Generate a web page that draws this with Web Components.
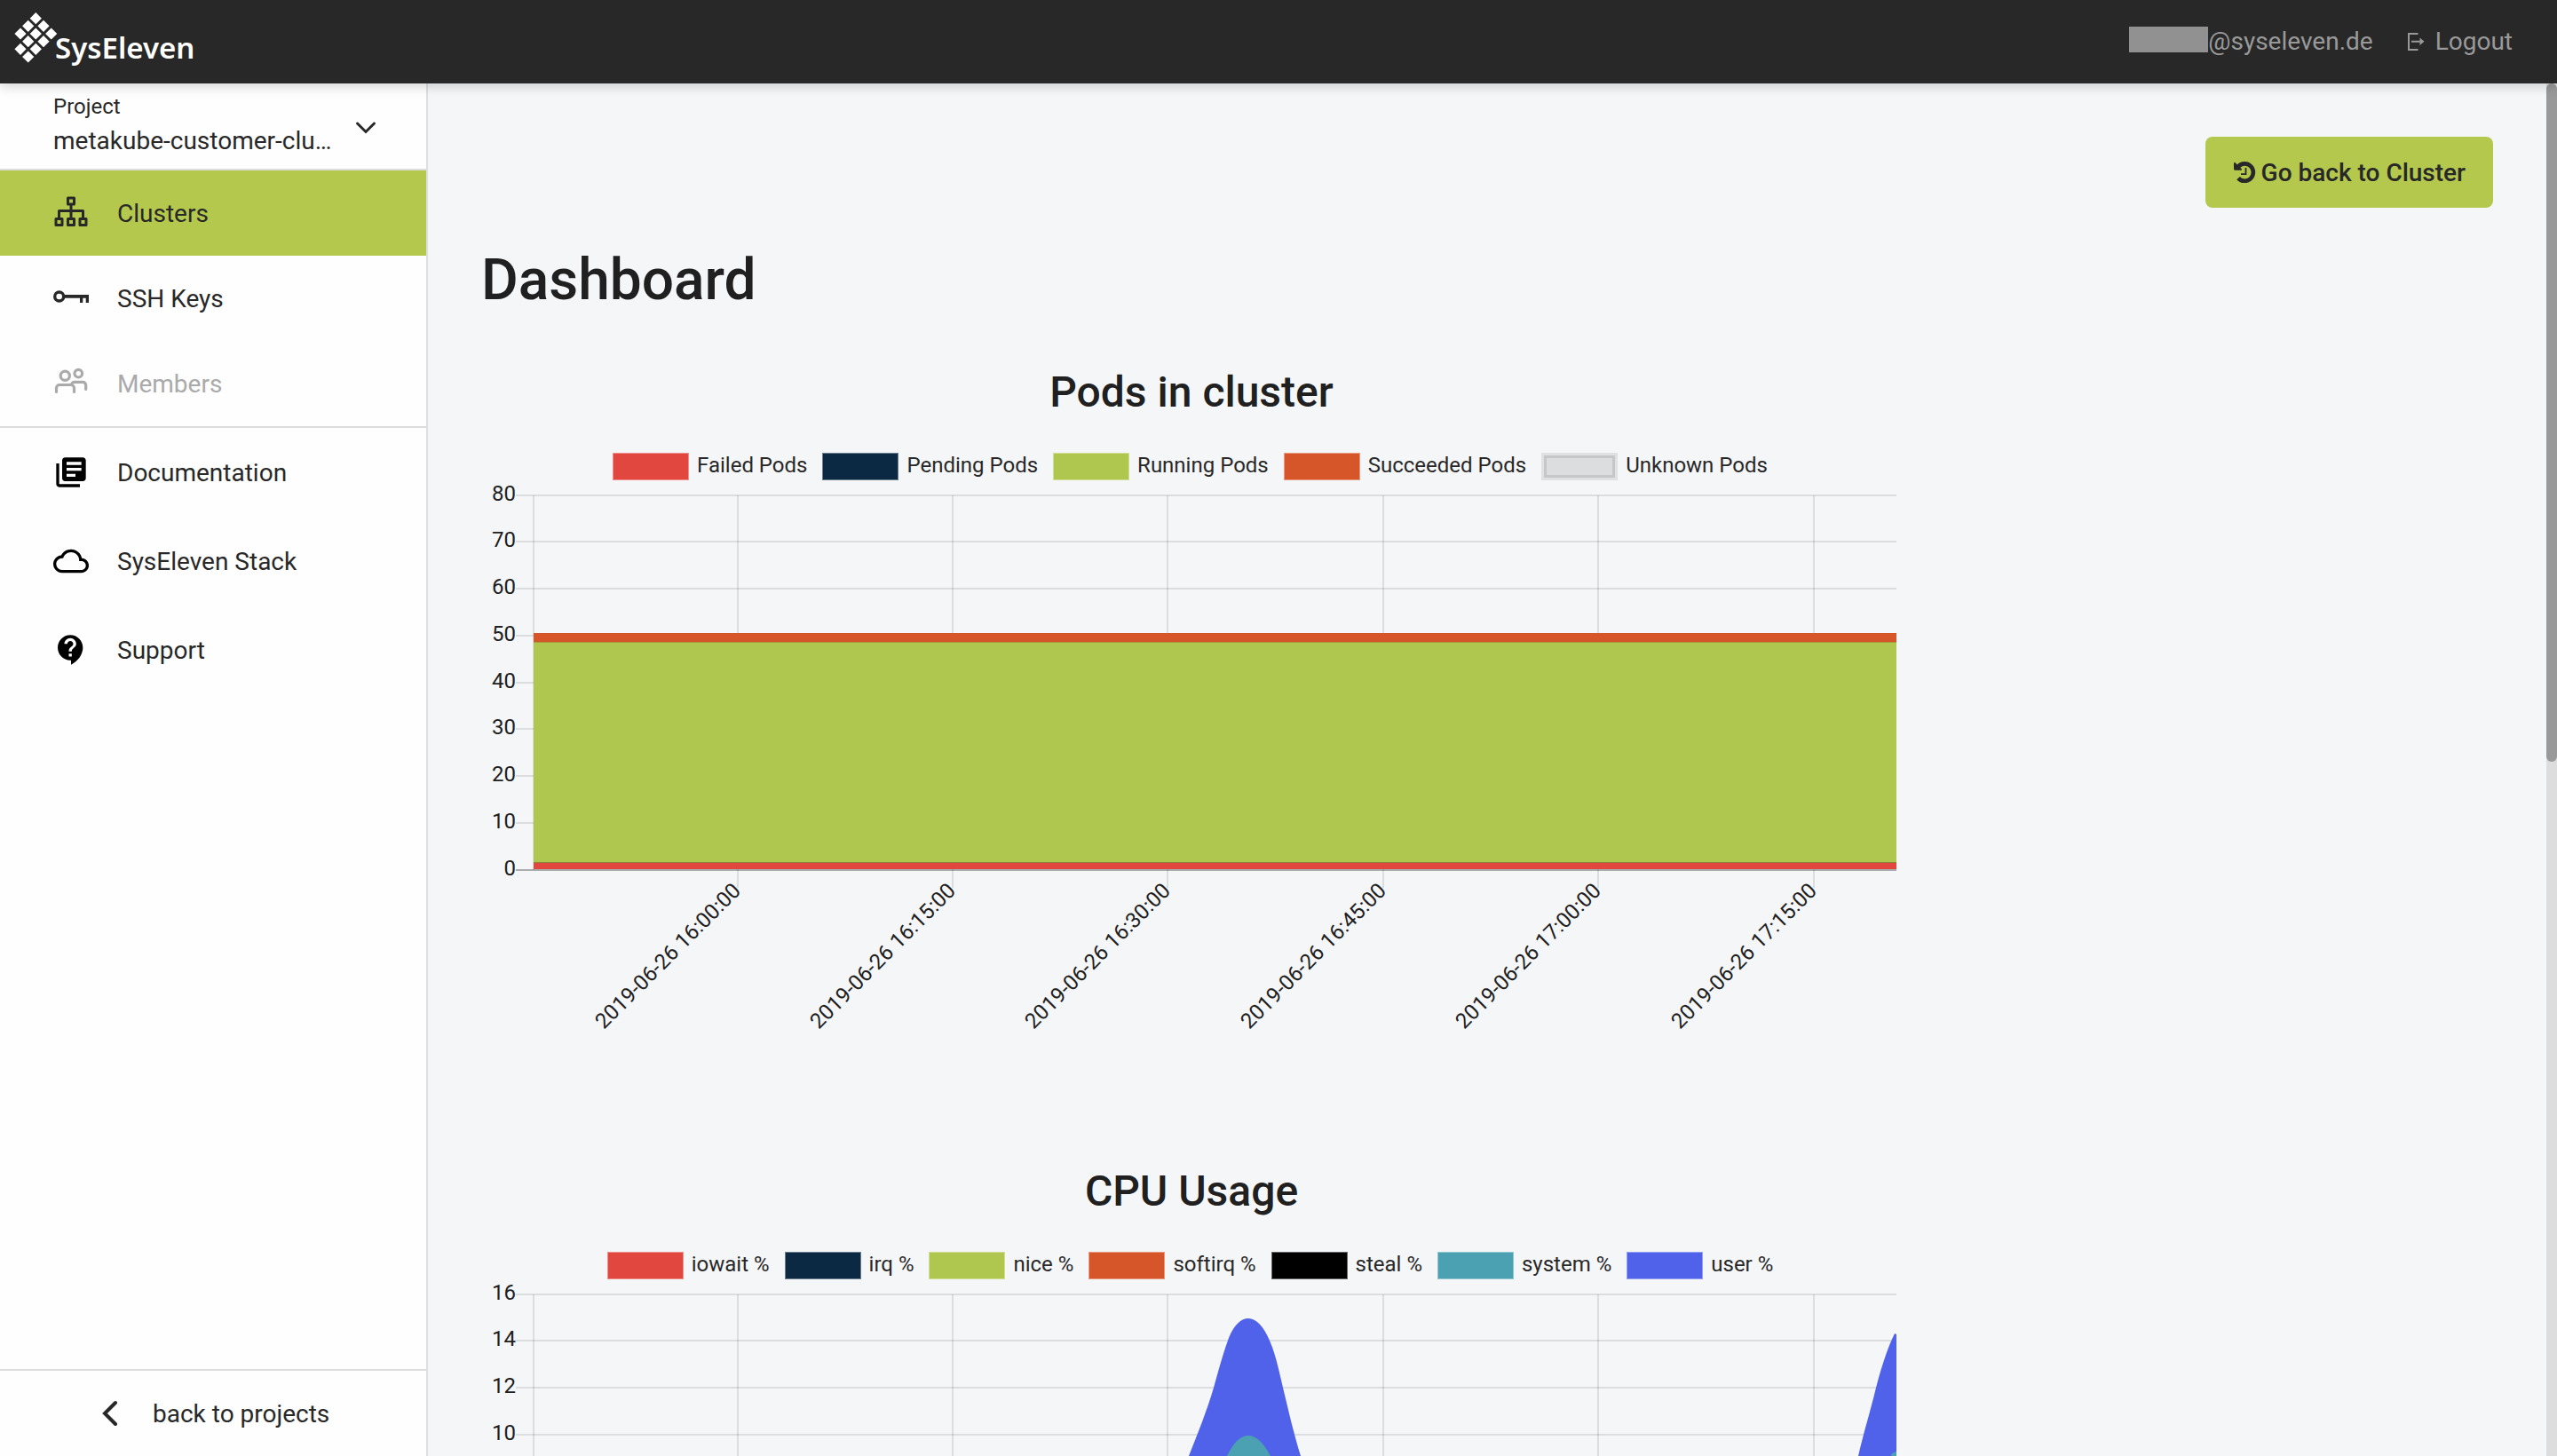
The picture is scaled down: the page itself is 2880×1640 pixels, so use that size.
<!DOCTYPE html>
<html lang="en">
<head>
<meta charset="utf-8">
<title>Dashboard</title>
<style>
  html, body { height: 100%; }
  body {
    margin: 0;
    font-family: Roboto, "Liberation Sans", sans-serif;
    font-size: 28px;
    line-height: 36px;
    color: #282828;
    background: #f5f6f8;
  }
</style>
</head>
<body>
<app-shell>
  <top-bar slot="header"></top-bar>
  <side-nav slot="nav"></side-nav>
  <dashboard-page></dashboard-page>
</app-shell>

<script>
const define = (name, html, setup) => customElements.define(name, class extends HTMLElement {
  constructor() {
    super();
    const t = document.createElement('template');
    t.innerHTML = html;
    this.attachShadow({ mode: 'open' }).append(t.content.cloneNode(true));
  }
  connectedCallback() { if (setup) setup(this, this.shadowRoot); }
});

const ICONS = {
  clusters: '<g fill="none" stroke="currentColor" stroke-width="3" stroke-linejoin="round"><rect x="16.5" y="3" width="7" height="7"/><rect x="3" y="26.5" width="7" height="7"/><rect x="16.5" y="26.5" width="7" height="7"/><rect x="30" y="26.5" width="7" height="7"/><path d="M20 11v14M6.500 25v-7.500h27v7.500"/></g>',
  key: '<circle cx="6.700" cy="18" r="5" fill="none" stroke="currentColor" stroke-width="3.400"/><path fill="currentColor" d="M12.500 16H40v9h-3.300v-5.300h-3.400V25H30v-5.300H12.500z"/>',
  members: '<g fill="none" stroke="currentColor" stroke-width="3.200" stroke-linecap="round"><circle cx="13.300" cy="11.300" r="5.100"/><circle cx="28.300" cy="8.700" r="4.300"/><path d="M3.500 29.500V25a3.500 3.500 0 0 1 3.500-3.500h13a3.500 3.500 0 0 1 3.500 3.500v4.500M21 20a4 4 0 0 1 2.500-1.700h9.700a3.500 3.500 0 0 1 3.500 3.500v4.700"/></g>',
  docs: '<path fill="#000" transform="scale(1.6667)" d="M4 6H2v14c0 1.1.9 2 2 2h14v-2H4V6zm16-4H8c-1.100 0-2 .9-2 2v12c0 1.100.9 2 2 2h12c1.100 0 2-.9 2-2V4c0-1.100-.9-2-2-2zm-1 9H9V9h10v2zm-4 4H9v-2h6v2zm4-8H9V5h10v2z"/>',
  cloud: '<path fill="#000" transform="scale(1.6667)" d="M19.350 10.040C18.670 6.590 15.640 4 12 4 9.110 4 6.600 5.640 5.350 8.040 2.340 8.360 0 10.910 0 14c0 3.310 2.690 6 6 6h13c2.760 0 5-2.240 5-5 0-2.640-2.050-4.780-4.650-4.960zM19 18H6c-2.210 0-4-1.790-4-4s1.790-4 4-4h.710C7.370 7.690 9.480 6 12 6c3.040 0 5.500 2.460 5.500 5.500v.5H19c1.660 0 3 1.340 3 3s-1.340 3-3 3z"/>',
  support: '<path fill="#000" transform="scale(1.6667)" d="M11.500 2C6.810 2 3 5.810 3 10.500S6.810 19 11.500 19h.5v3c4.860-2.340 8-7 8-11.500C20 5.810 16.190 2 11.500 2zm1 14.500h-2v-2h2v2zm0-3.500h-2c0-3.250 3-3 3-5 0-1.100-.9-2-2-2s-2 .9-2 2h-2c0-2.210 1.790-4 4-4s4 1.790 4 4c0 2.500-3 2.750-3 5z"/>'
};

define('app-shell', `
  <style>
    :host { display: flex; flex-direction: column; height: 100vh; }
    .body { display: flex; flex: 1; min-height: 0; }
    ::slotted([slot=header]) { position: relative; z-index: 1; }
    main { flex: 1; min-width: 0; overflow: auto; scrollbar-width: none; }
    .track { flex: none; width: 12px; background: #ddd; }
    .thumb { height: 49.4%; background: #999; border-radius: 6px; }
  </style>
  <slot name="header"></slot>
  <div class="body">
    <slot name="nav"></slot>
    <main><slot></slot></main>
    <div class="track"><div class="thumb"></div></div>
  </div>`);

define('brand-logo', `
  <style>
    :host { display: block; }
    a { display: flex; align-items: flex-start; color: #fff; text-decoration: none; }
    svg { flex: none; width: 62px; height: 72px; }
    span { font: 600 33px/40px "Noto Sans", sans-serif; margin-top: 34px; }
  </style>
  <a href="#"><svg viewBox="0 0 62 72" aria-hidden="true"></svg><span>SysEleven</span></a>`,
  (el, root) => {
    const centres = [[121,62],[95,88],[147,88],[69,114],[121,114],[173,114],[95,140],[147,140],[69,166],[121,166],[95,192]];
    const svg = root.querySelector('svg');
    svg.style.overflow = 'visible';
    svg.innerHTML = `<path fill="#fff" d="${centres.map(([x, y]) => `M${(x / 3).toFixed(1)} ${(y / 3 - 6.6).toFixed(1)}l6.600 6.600-6.600 6.600-6.600-6.600z`).join('')}"/>`;
  });

define('top-bar', `
  <style>
    :host { display: block; background: #282828; box-shadow: 0 4px 12px rgba(0,0,0,.16); }
    header { display: flex; justify-content: space-between; height: 94px; }
    .user { display: flex; align-items: center; padding-right: 50px; color: #999; }
    .mask { width: 89px; height: 29px; margin-bottom: 6px; background: #919191; }
    a { display: flex; align-items: center; gap: 11px; margin-left: 39px; color: inherit; text-decoration: none; }
    svg { width: 20px; height: 20px; }
  </style>
  <header>
    <brand-logo></brand-logo>
    <div class="user">
      <span class="mask"></span><span>@syseleven.de</span>
      <a href="#"><svg viewBox="0 0 20 20" aria-hidden="true"><path d="M11.500 1H1v18h10.500M4 9.700h12" fill="none" stroke="currentColor" stroke-width="2"/><path d="M13.500 5.500l5 4.200-5 4.300z" fill="currentColor"/></svg>Logout</a>
    </div>
  </header>`);

define('nav-item', `
  <style>
    :host { display: block; height: 96px; }
    :host([tall]) { height: 100px; }
    a { display: flex; align-items: center; gap: 32px; height: 100%; padding-left: 60px; color: #282828; text-decoration: none; }
    :host([active]) a { background: #b4c84e; }
    :host([disabled]) a { color: #aaa; }
    svg { flex: none; width: 40px; height: 40px; }
    span { padding-top: 2px; }
  </style>
  <a href="#"><svg viewBox="0 0 40 40" aria-hidden="true"></svg><span><slot></slot></span></a>`,
  (el, root) => {
    root.querySelector('svg').innerHTML = ICONS[el.getAttribute('icon')];
    if (el.hasAttribute('disabled')) {
      root.querySelector('a').removeAttribute('href');
      root.querySelector('a').setAttribute('aria-disabled', 'true');
    }
  });

define('side-nav', `
  <style>
    :host { display: flex; flex-direction: column; flex: none; width: 480px; background: #fefefe; border-right: 2px solid #dedfe1; }
    .project { display: flex; align-items: flex-start; justify-content: space-between; box-sizing: border-box; height: 98px; padding: 7px 56px 0 60px; border: 0; border-bottom: 2px solid #dcdcdc; background: none; font: inherit; color: inherit; text-align: left; }
    .label { display: block; font-size: 24px; line-height: 38px; }
    .name { display: block; line-height: 40px; }
    .project svg { width: 24px; height: 16px; margin-top: 35px; }
    .group { border-bottom: 2px solid #dcdcdc; }
    .links { flex: 1; }
    .back { display: flex; align-items: center; gap: 40px; height: 96px; padding-left: 114px; border-top: 2px solid #dcdcdc; color: inherit; text-decoration: none; }
    .back svg { width: 18px; height: 30px; }
    .back span { padding-top: 2px; }
  </style>
  <button class="project">
    <span><span class="label">Project</span><span class="name">metakube-customer-clu…</span></span>
    <svg viewBox="0 0 24 16" aria-hidden="true"><path d="M2.500 3L12 12.500 21.500 3" fill="none" stroke="currentColor" stroke-width="3" stroke-linecap="round"/></svg>
  </button>
  <nav class="group">
    <nav-item icon="clusters" active>Clusters</nav-item>
    <nav-item icon="key">SSH Keys</nav-item>
    <nav-item icon="members" disabled>Members</nav-item>
  </nav>
  <nav class="links">
    <nav-item icon="docs" tall>Documentation</nav-item>
    <nav-item icon="cloud" tall>SysEleven Stack</nav-item>
    <nav-item icon="support" tall>Support</nav-item>
  </nav>
  <a class="back" href="#"><svg viewBox="0 0 18 30" aria-hidden="true"><path d="M16 3L4 15l12 12" fill="none" stroke="currentColor" stroke-width="4" stroke-linecap="round"/></svg><span>back to projects</span></a>`);

define('action-button', `
  <style>
    :host { display: block; }
    button { display: flex; align-items: center; gap: 7px; height: 80px; padding: 0 31px 0 32px; border: 0; border-radius: 8px; background: #b4c84e; color: #282828; font: 500 28px/36px Roboto, sans-serif; }
    svg { width: 24px; height: 24px; overflow: visible; }
    span { padding-top: 2px; }
  </style>
  <button><svg viewBox="0 0 24 24" aria-hidden="true"><path d="M5 5.600A9.700 9.700 0 1 1 5 18.600" fill="none" stroke="currentColor" stroke-width="4.600"/><path d="M0 1.600Q.7.400 1.600 1.200L9 8.400Q9.200 9.600 8 9.700H1.200Q0 9.600 0 8.500z" fill="currentColor"/><path d="M13.500 7v7.200H8" fill="none" stroke="currentColor" stroke-width="1.800"/></svg><span><slot></slot></span></button>`);

define('legend-item', `
  <style>
    :host { display: flex; align-items: flex-start; gap: 9px; }
    i { box-sizing: border-box; width: 86px; height: 31px; background: var(--c); border: 1px solid rgba(255,255,255,.4); }
    :host([outlined]) i { border: 0; background: #dcdddf; box-shadow: inset 0 0 0 3px #e0e1e3, inset 0 0 0 6px #c6c7c9; }
    span { font-size: 24px; line-height: 28px; white-space: nowrap; }
  </style>
  <i></i><span><slot></slot></span>`,
  el => el.style.setProperty('--c', el.getAttribute('color')));

const SERIES = {
  pods: '<path fill="#d65629" d="M59 172H1594V183H59z"/><path fill="#b0c74f" d="M59 183H1594V431H59z"/><path stroke="#a89a3a" d="M59 182.500H1594"/><path fill="#e2473f" d="M59 431H1594V438H59z"/><path stroke="#8f8434" d="M59 430.500H1594"/>',
  cpu: '<g transform="translate(-542 -1441)"><path fill="#5061ea" d="M601 1850L1240 1840C1290 1820 1310 1720 1339 1640C1350 1612 1359 1590 1367 1563C1372 1545 1377 1526 1384 1507C1390 1492 1398 1485 1406 1485C1415 1485 1423 1494 1430 1510C1437 1526 1441 1546 1445 1563C1452 1592 1457 1614 1465 1640C1490 1730 1500 1830 1540 1840L2010 1840C2050 1820 2070 1730 2093 1640C2100 1610 2106 1592 2113 1563C2119 1540 2126 1518 2134 1502L2136 1503V1879H601z"/><path fill="#4ba1b2" d="M601 1860L1260 1850C1320 1830 1350 1720 1382 1640Q1393 1617 1406 1617Q1419 1617 1431 1640C1462 1720 1480 1840 1530 1850L2010 1850C2060 1820 2090 1740 2131 1637L2136 1635V1879H601z"/></g>'
};

define('chart-card', `
  <style>
    :host { display: block; max-width: 1600px; height: 900px; }
    h2 { margin: 0 0 38px; font-size: 48px; line-height: 60px; font-weight: 500; text-align: center; color: #202020; }
    .legend { display: flex; justify-content: center; gap: 17px; padding-right: 3px; }
    svg { display: block; width: 100%; }
    text { font-size: 24px; fill: #202020; }
  </style>
  <h2></h2>
  <div class="legend"><slot></slot></div>
  <svg viewBox="0 0 1600 640"></svg>`,
  (el, root) => {
    root.querySelector('h2').textContent = el.getAttribute('heading');
    const left = 59, right = 1594, top = 17, bottom = 439;
    const max = +el.getAttribute('max');
    const labels = +(el.getAttribute('labels') || 9);
    const times = (el.getAttribute('times') || '').split(' ');
    let out = '';
    for (let i = 0; i <= 8; i++) {
      const y = Math.floor(top + i * (bottom - top) / 8);
      out += `<path d="M39 ${y}H${right}" stroke="#000" stroke-opacity="${i === 8 ? .3 : .1}" stroke-width="2"/>`;
      if (i < labels) out += `<text x="39" y="${y + 6}" text-anchor="end">${max - i * max / 8}</text>`;
    }
    out += `<path d="M${left} ${top}V${bottom}" stroke="#000" stroke-opacity=".1" stroke-width="2"/>`;
    for (let i = 0; i < 6; i++) {
      const x = Math.floor(289 + i * 242.400);
      out += `<path d="M${x} ${top}V${bottom + 20}" stroke="#000" stroke-opacity=".1" stroke-width="2"/>`;
      if (times[i]) out += `<text transform="translate(${x - 1} ${bottom + 19}) rotate(-45)" text-anchor="end" dominant-baseline="central">2019-06-26 ${times[i]}</text>`;
    }
    out += SERIES[el.getAttribute('series')];
    root.querySelector('svg').innerHTML = out;
  });

define('dashboard-page', `
  <style>
    :host { display: block; padding: 60px 60px 0; }
    .actions { display: flex; justify-content: flex-end; }
    h1 { margin: 42px 0 56px; font-size: 64px; line-height: 80px; font-weight: 500; color: #202020; }
  </style>
  <div class="actions"><action-button>Go back to Cluster</action-button></div>
  <h1>Dashboard</h1>
  <chart-card heading="Pods in cluster" max="80" series="pods" times="16:00:00 16:15:00 16:30:00 16:45:00 17:00:00 17:15:00">
    <legend-item color="#e2473f">Failed Pods</legend-item>
    <legend-item color="#0c2944">Pending Pods</legend-item>
    <legend-item color="#b0c74f">Running Pods</legend-item>
    <legend-item color="#d65629">Succeeded Pods</legend-item>
    <legend-item outlined>Unknown Pods</legend-item>
  </chart-card>
  <chart-card heading="CPU Usage" max="16" labels="4" series="cpu">
    <legend-item color="#e2473f">iowait %</legend-item>
    <legend-item color="#0c2944">irq %</legend-item>
    <legend-item color="#b0c74f">nice %</legend-item>
    <legend-item color="#d65629">softirq %</legend-item>
    <legend-item color="#000">steal %</legend-item>
    <legend-item color="#4ba1b2">system %</legend-item>
    <legend-item color="#5061ea">user %</legend-item>
  </chart-card>`);
</script>
</body>
</html>
